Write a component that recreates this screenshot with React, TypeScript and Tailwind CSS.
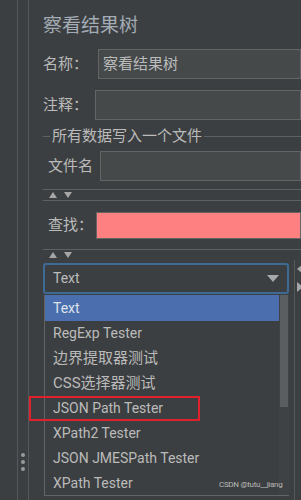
import React from "react";

const font = { fontFamily: 'Roboto, "Noto Sans CJK SC", sans-serif' };

const Arrows: React.FC = () => (
  <div className="flex h-[10px] items-center gap-[7px] pl-[6px]">
    <span className="h-0 w-0 border-x-[4.5px] border-b-[6px] border-x-transparent border-b-[#a6a6a6]" />
    <span className="h-0 w-0 border-x-[4.5px] border-t-[6px] border-x-transparent border-t-[#a6a6a6]" />
  </div>
);

// cjk rows keep 15px, latin rows sit at 14px
const items = [
  { t: "Text", cjk: false },
  { t: "RegExp Tester", cjk: false },
  { t: "边界提取器测试", cjk: true },
  { t: "CSS选择器测试", cjk: true },
  { t: "JSON Path Tester", cjk: false },
  { t: "XPath2 Tester", cjk: false },
  { t: "JSON JMESPath Tester", cjk: false },
  { t: "XPath Tester", cjk: false },
];

export default function App() {
  return (
    <div
      className="relative flex h-[500px] w-[301px] overflow-hidden bg-[#3c3f41] text-[15px] text-[#bbbbbb]"
      style={font}
    >
      {/* left gutter */}
      <div className="w-[17px] shrink-0" />
      <div className="relative w-[12px] shrink-0 border-x border-[#56595b]">
        <div className="absolute left-[3px] top-[453px] flex flex-col gap-[3px]">
          <span className="h-[4px] w-[4px] rounded-full bg-[#9a9a9a]" />
          <span className="h-[4px] w-[4px] rounded-full bg-[#9a9a9a]" />
          <span className="h-[4px] w-[4px] rounded-full bg-[#9a9a9a]" />
        </div>
      </div>

      {/* main panel */}
      <div className="flex min-w-0 flex-1 flex-col pl-[14px]">
        <div className="mt-[12px] h-[28px] text-[19px] leading-[28px] text-[#a3acb5]">察看结果树</div>

        <div className="mt-[9px] flex h-[30px] items-center">
          <span className="w-[55px] shrink-0">名称：</span>
          <div className="flex h-full flex-1 items-center border border-[#646464] bg-[#45494a] pl-[4px]">
            察看结果树
          </div>
        </div>

        <div className="mt-[11px] flex h-[30px] items-center">
          <span className="w-[52px] shrink-0">注释：</span>
          <div className="h-full flex-1 border border-[#646464] bg-[#45494a]" />
        </div>

        <div className="mt-[6px] flex h-[20px] items-center">
          <span className="h-px w-[7px] bg-[#5e6163]" />
          <span className="px-[2px]">所有数据写入一个文件</span>
          <span className="h-px flex-1 bg-[#5e6163]" />
        </div>

        <div className="mt-[5px] flex h-[30px] items-center pl-[5px]">
          <span className="w-[52px] shrink-0">文件名</span>
          <div className="h-full flex-1 border border-[#646464] bg-[#45494a]" />
        </div>

        <div className="mt-[8px] h-px bg-[#5e6163]" />
        <Arrows />
        <div className="h-px bg-[#5e6163]" />

        <div className="mt-[11px] flex h-[27px] items-center pl-[5px]">
          <span className="w-[48px] shrink-0">查找：</span>
          <div className="h-full flex-1 border border-[#646464] bg-[#ff8080]" />
        </div>

        <div className="mt-[10px] h-px bg-[#5e6163]" />
        <Arrows />

        <div className="flex flex-1">
          <div className="flex w-[246px] shrink-0 flex-col">
            <div className="mt-[3px] flex h-[31px] items-center justify-between rounded-[3px] border-2 border-[#3e6a96] bg-[#3c3f41] pl-[8px] pr-[8px] text-[14px]">
              <span>Text</span>
              <span className="h-0 w-0 border-x-[6px] border-t-[7px] border-x-transparent border-t-[#a8a8a8]" />
            </div>
            <div className="ml-[1px] mt-[1px] flex h-[201px] border-b border-l border-[#646464] bg-[#3c3f41]">
              <div className="flex-1">
                {items.map((it, i) => (
                  <div
                    key={it.t}
                    className={
                      (i === 0
                        ? "flex h-[26px] items-center bg-[#4b6eaf] pl-[8px] text-[#dfe4ea]"
                        : "flex h-[25px] items-center pl-[8px]") +
                      (it.cjk ? " text-[15px]" : " text-[14px]")
                    }
                  >
                    {it.t}
                  </div>
                ))}
              </div>
              <div className="w-[10px] bg-[#3f4244]">
                <div className="mx-auto h-[112px] w-[8px] bg-[#5b5e60]" />
              </div>
            </div>
          </div>
          <div className="ml-[5px] flex flex-1 border-l border-[#56595b]">
            <div className="ml-[2px] mt-[4px] flex flex-col gap-[8px]">
              <span className="h-0 w-0 border-y-[5px] border-r-[6px] border-y-transparent border-r-[#a6a6a6]" />
              <span className="h-0 w-0 border-y-[5px] border-l-[6px] border-y-transparent border-l-[#a6a6a6]" />
            </div>
          </div>
        </div>
      </div>

      {/* annotation */}
      <div className="absolute left-[29px] top-[396px] h-[25px] w-[171px] border-2 border-[#e0202a]" />
      <div className="absolute left-[219px] top-[479px] text-[8px] tracking-[-0.3px] text-[#b8b8b8]">
        CSDN @tutu__jiang
      </div>
    </div>
  );
}
